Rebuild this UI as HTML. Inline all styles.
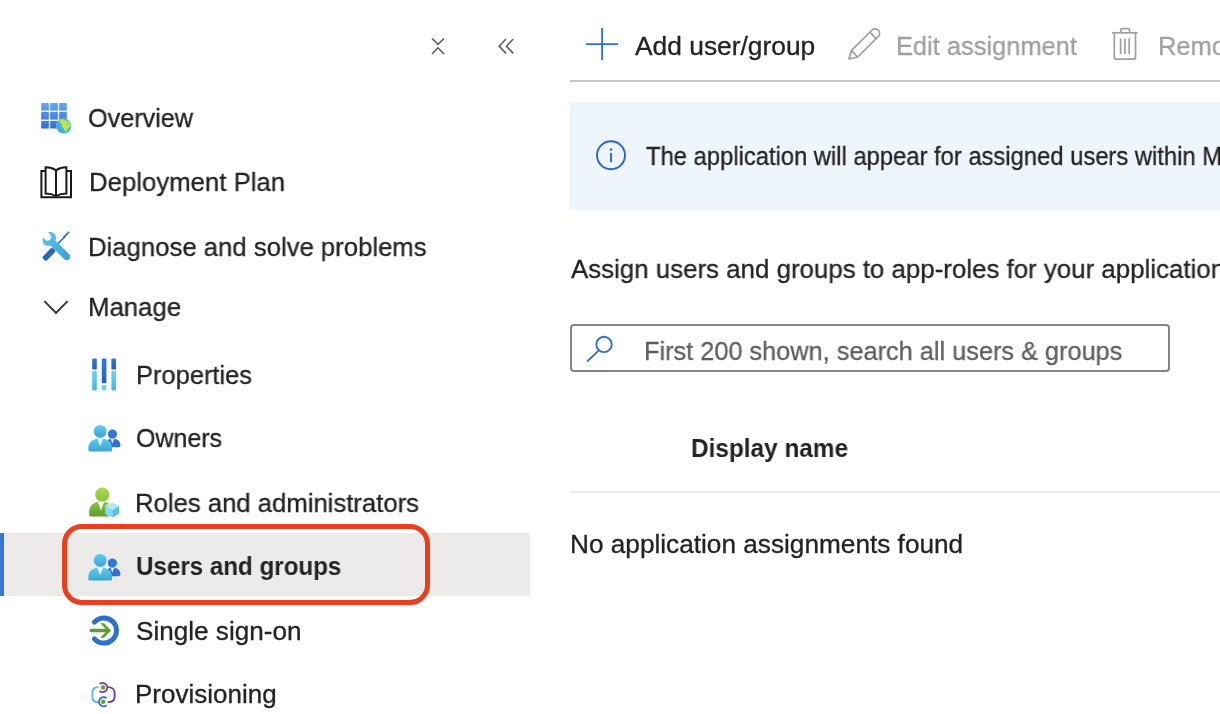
<!DOCTYPE html>
<html><head><meta charset="utf-8">
<style>
html,body{margin:0;padding:0;background:#fff;}
body{width:1220px;height:714px;overflow:hidden;position:relative;font-family:"Liberation Sans",sans-serif;color:#242322;}
.t{position:absolute;transform-origin:0 0;will-change:transform;-webkit-text-stroke:0.3px currentColor;font-size:26px;line-height:30px;white-space:nowrap;}
.ic{position:absolute;overflow:visible;}
.b{font-weight:bold;-webkit-text-stroke:0;}
</style></head><body>

<!-- sidebar top icons -->
<svg class="ic" style="left:0;top:0" width="560" height="100" viewBox="0 0 560 100">
  <path d="M432 38.5 L438 44.3 L444 38.5 M432 54 L438 47.8 L444 54" fill="none" stroke="#605e5c" stroke-width="1.6"/>
  <path d="M506 39 L499.2 46.2 L506 53.4 M513.2 39 L506.4 46.2 L513.2 53.4" fill="none" stroke="#605e5c" stroke-width="1.6"/>
</svg>

<!-- selected highlight -->
<div style="position:absolute;left:0;top:532.5px;width:530px;height:63.5px;background:#edebe9"></div>
<div style="position:absolute;left:0;top:532.5px;width:4px;height:63.5px;background:#3877d3"></div>

<!-- menu texts -->
<div class="t" style="left:88.0px;top:103.0px;transform:scaleX(0.9695)">Overview</div>
<div class="t" style="left:88.5px;top:167.1px;transform:scaleX(0.9906)">Deployment Plan</div>
<div class="t" style="left:88.0px;top:231.5px;transform:scaleX(0.9885)">Diagnose and solve problems</div>
<div class="t" style="left:88.0px;top:292.3px;transform:scaleX(0.9913)">Manage</div>
<div class="t" style="left:135.6px;top:359.6px;transform:scaleX(0.9786)">Properties</div>
<div class="t" style="left:136.0px;top:423.4px;transform:scaleX(0.9607)">Owners</div>
<div class="t" style="left:135.0px;top:487.6px;transform:scaleX(0.9875)">Roles and administrators</div>
<div class="t b" style="left:136.1px;top:551.4px;transform:scaleX(0.929)">Users and groups</div>
<div class="t" style="left:136.0px;top:615.8px;transform:scaleX(1.0042)">Single sign-on</div>
<div class="t" style="left:135.0px;top:679.2px;transform:scaleX(0.9988)">Provisioning</div>

<!-- red annotation -->
<div style="position:absolute;left:62px;top:523.5px;width:358px;height:71.7px;border:5px solid #e8401f;border-radius:20px;"></div>

<!-- toolbar -->
<svg class="ic" style="left:0;top:0" width="1220" height="100" viewBox="0 0 1220 100">
  <path d="M586 44.2 H618 M602.1 28 V60.2" stroke="#2f6fd0" stroke-width="1.8" fill="none"/>
</svg>
<div class="t" style="left:634.5px;top:31.0px;transform:scaleX(1.014)">Add user/group</div>
<div class="t" style="left:895.5px;top:31.0px;transform:scaleX(0.9779);color:#a19f9d">Edit assignment</div>
<div class="t" style="left:1158.0px;top:31.0px;transform:scaleX(0.9779);color:#a19f9d">Remove</div>
<div style="position:absolute;left:570px;top:80px;width:650px;height:2px;background:#c8c6c4"></div>

<!-- banner -->
<div style="position:absolute;left:570px;top:102px;width:650px;height:108px;background:#eff5fd"></div>
<div class="t" style="left:645.6px;top:140.7px;transform:scaleX(0.9142)">The application will appear for assigned users within My Apps</div>

<div class="t" style="left:570.5px;top:254.2px;transform:scaleX(0.9945)">Assign users and groups to app-roles for your application here.</div>

<!-- search -->
<div style="position:absolute;left:570px;top:324.3px;width:596px;height:43.6px;border:2px solid #858381;border-radius:4px"></div>
<div class="t" style="left:644.0px;top:335.6px;transform:scaleX(0.9736);color:#605e5c">First 200 shown, search all users &amp; groups</div>

<div class="t b" style="left:690.6px;top:432.9px;transform:scaleX(0.937)">Display name</div>
<div style="position:absolute;left:570px;top:490.5px;width:650px;height:2px;background:#edebe9"></div>
<div class="t" style="left:569.8px;top:528.8px;transform:scaleX(1.0075)">No application assignments found</div>


<!-- ICONS overlay -->
<svg class="ic" style="left:0;top:0" width="1220" height="714" viewBox="0 0 1220 714">
<defs>
  <linearGradient id="gGrid" gradientUnits="userSpaceOnUse" x1="0" y1="103" x2="0" y2="129"><stop offset="0" stop-color="#67a5ee"/><stop offset="1" stop-color="#2f6dd3"/></linearGradient>
  <linearGradient id="gLB" x1="0" y1="0" x2="0" y2="1"><stop offset="0" stop-color="#5fcdf0"/><stop offset="1" stop-color="#3ea3d3"/></linearGradient>
  <linearGradient id="gDB" x1="0" y1="0" x2="0" y2="1"><stop offset="0" stop-color="#3176d6"/><stop offset="1" stop-color="#2463c4"/></linearGradient>
  <linearGradient id="gGreen" gradientUnits="userSpaceOnUse" x1="0" y1="488" x2="0" y2="517"><stop offset="0" stop-color="#a8d84c"/><stop offset="0.45" stop-color="#8cc43f"/><stop offset="1" stop-color="#5e9a30"/></linearGradient>
  <linearGradient id="gWr" x1="0" y1="0" x2="1" y2="1"><stop offset="0" stop-color="#5cc8ee"/><stop offset="1" stop-color="#3a9fd3"/></linearGradient>
  <linearGradient id="gBarL" x1="0" y1="0" x2="0" y2="1"><stop offset="0" stop-color="#6ad6f6"/><stop offset="1" stop-color="#48b4e0"/></linearGradient>
</defs>

<!-- Overview grid + globe -->
<path d="M41.2 103 H66.8 V121 H59 V128.6 H41.2 Z" fill="#e3edfb"/>
<g fill="url(#gGrid)">
  <rect x="41.2" y="103" width="7.6" height="7.6" rx="0.4"/>
  <rect x="50.2" y="103" width="7.6" height="7.6" rx="0.4"/>
  <rect x="59.2" y="103" width="7.6" height="7.6" rx="0.4"/>
  <rect x="41.2" y="112" width="7.6" height="7.6" rx="0.4"/>
  <rect x="50.2" y="112" width="7.6" height="7.6" rx="0.4"/>
  <rect x="59.2" y="112" width="7.6" height="7.6" rx="0.4"/>
  <rect x="41.2" y="121" width="7.6" height="7.6" rx="0.4"/>
  <rect x="50.2" y="121" width="7.6" height="7.6" rx="0.4"/>
</g>

<circle cx="63.7" cy="125.9" r="7.9" fill="#8ccdf0" opacity="0.5"/>
<circle cx="63.7" cy="125.9" r="7.4" fill="#44b0dc"/>
<path d="M59.2 121.7 C59.6 120.4 60.6 119.4 62.1 118.9 C63.4 119.4 64.4 120 65.4 120.4 L67.5 121.1 C68.6 121.6 69.4 122.2 69.8 122.8 C70.4 123.6 70.8 124.6 70.8 125.4 C70.6 126 70.2 126.4 69.8 126.8 C69.2 127.4 68.6 128 68.1 128.8 C67.6 129.6 67.2 130.2 66.8 130.8 C66.4 131.2 65.9 131.6 65.4 131.8 L64.8 131.2 C64.5 130.6 64.3 130 64.1 129.5 C63.7 128.9 63.2 128.3 62.8 127.8 C62.3 127.2 61.9 126.7 61.7 126.1 C61.5 125.2 61.5 124.2 61.4 123.4 C61 123.1 60.7 123 60.4 122.8 C59.9 122.5 59.5 122.1 59.2 121.7 Z" fill="#bde64d"/>
<circle cx="68.1" cy="123.8" r="0.9" fill="#5cbad0"/>

<!-- Book -->
<g fill="none" stroke="#1b1a19" stroke-width="2" stroke-linejoin="miter">
  <path d="M45.4 171.1 H41.4 V197.2 H71 V171.1 H66.8"/>
  <path d="M56 196 V170.4 C53 168.2 49.6 167.3 45.6 167.3 V193.4 C49.6 193.4 53.2 194.4 56 196 C58.8 194.4 62.4 193.4 66.4 193.4 V167.3 C62.4 167.3 59 168.2 56 170.4"/>
</g>

<!-- Wrench + screwdriver -->
<path d="M56.2 245.4 L64.6 237" stroke="#2f72c4" stroke-width="1.7" stroke-linecap="round"/>
<path d="M63.2 236.4 L68.2 231.8 C69 231.2 69.9 232 69.4 232.8 L64.8 237.8 L63.4 238 Z" fill="#2f72c4"/>
<path d="M42.9 256.4 L50.6 248.6 C51.4 247.8 52.8 247.8 53.6 248.6 L54.6 249.6 C55.4 250.4 55.4 251.8 54.6 252.6 L46.8 260.4 C46.2 261 45.4 261 44.8 260.4 L42.9 258.5 C42.3 257.9 42.3 257 42.9 256.4 Z" fill="#2b67b4"/>
<path d="M48.3 232.3 C52.2 231.2 55.8 233.6 56 237.6 C56 238.8 55.8 239.6 55.4 240.4 L69.2 254.2 C70.6 255.6 70.6 257.8 69.2 259.2 C67.8 260.6 65.6 260.6 64.2 259.2 L50.4 245.4 C46 246.8 42.4 243.8 42.6 239.6 C42.6 238.8 42.8 238 43 237.4 L46.4 240.8 L50.4 240 L51.2 236 Z" fill="url(#gWr)"/>

<!-- Chevron manage -->
<path d="M44.4 301.2 L56 312.8 L67.6 301.2" fill="none" stroke="#323130" stroke-width="1.9"/>

<!-- Properties bars -->
<g>
  <rect x="92.2" y="358.4" width="4.6" height="11" rx="1" fill="url(#gDB)"/>
  <rect x="92.2" y="371" width="4.6" height="19.4" rx="0.8" fill="url(#gBarL)"/>
  <rect x="101.8" y="358.4" width="4.6" height="24.8" rx="1" fill="url(#gDB)"/>
  <rect x="101.8" y="385" width="4.6" height="5.4" rx="0.8" fill="#6ad6f6"/>
  <rect x="111.4" y="358.4" width="4.6" height="11" rx="1" fill="url(#gDB)"/>
  <rect x="111.4" y="371" width="4.6" height="19.4" rx="0.8" fill="url(#gBarL)"/>
</g>

<!-- people icon (owners) -->
<g id="ppl">
  <circle cx="112.4" cy="434" r="4.6" fill="#3176d6"/>
  <path d="M106.5 447.2 V443.8 C106.5 440.6 109 438.6 112.4 438.6 C115.8 438.6 120.3 440.6 120.3 444.6 V445.6 C120.3 446.5 119.6 447.2 118.7 447.2 Z" fill="#2e6fd0"/>
  <path d="M110.4 438.8 L114.4 438.8 L112.4 443.6 Z" fill="#d8ecfb"/>
  <circle cx="100.2" cy="431.4" r="6.4" fill="url(#gLB)"/>
  <path d="M88.4 450 V447.5 C88.4 441.8 93.5 438.2 100.2 438.2 C106.9 438.2 112 441.8 112 447.5 V450 C112 450.9 111.3 451.6 110.4 451.6 H90 C89.1 451.6 88.4 450.9 88.4 450 Z" fill="url(#gLB)"/>
  <path d="M97.2 438.3 L103.2 438.3 L100.2 446.3 Z" fill="#e6f6fd"/>
</g>
<use href="#ppl" x="0" y="129"/>

<!-- Roles person -->
<circle cx="102.3" cy="494.7" r="7.1" fill="url(#gGreen)"/>
<path d="M89.1 514.8 V511.8 C89.1 505.2 94.6 501.4 100.7 501.4 C106.8 501.4 110.6 503.6 112 507 V516.5 H90.8 C89.9 516.5 89.1 515.7 89.1 514.8 Z" fill="url(#gGreen)"/>
<path d="M97.6 501.6 L104.2 501.6 L101 510.4 Z" fill="#fdfefb"/>
<!-- cube -->
<path d="M112.4 501.6 L119.6 505.6 L119.6 514 L112.4 518.2 L105.4 514 L105.4 505.6 Z" fill="#fff" opacity="0.7"/>
<path d="M112.4 502.4 L119 506.1 L112.4 509.9 L106 506.1 Z" fill="#b3e8f9"/>
<path d="M106 506.1 L112.4 509.9 L112.4 517.5 L106 513.7 Z" fill="#86daf8"/>
<path d="M119 506.1 L112.4 509.9 L112.4 517.5 L119 513.7 Z" fill="#5cbfe6"/>

<!-- SSO -->
<path d="M94.4 622.2 A12.6 12.6 0 1 1 94.4 638.8" fill="none" stroke="#2f70c9" stroke-width="5" stroke-linecap="round"/>
<path d="M91.3 630.5 H106" stroke="#5a9f2c" stroke-width="3.6" stroke-linecap="round"/>
<path d="M100.2 623.2 H104 L111 630.5 L104 637.8 H100.2 L107.2 630.5 Z" fill="#5a9f2c"/>

<!-- Provisioning -->
<path d="M98.6 687.1 C95 687.1 92.4 689 92.4 692.6 V696.8 C92.4 700.2 94.6 702.2 98 702.2" fill="none" stroke="#5bb8e3" stroke-width="1.9"/>
<path d="M107.8 687.1 C111.6 687.1 114.6 689 114.6 692.6 V696.8 C114.6 700.2 112 702.2 107.6 702.2" fill="none" stroke="#7a3d9a" stroke-width="1.9"/>
<path d="M99.6 684 A4.6 4.6 0 1 1 99.6 691" fill="none" stroke="#7a3d9a" stroke-width="1.9"/>
<path d="M106.6 698.3 A4.6 4.6 0 1 0 106.6 705.3" fill="none" stroke="#2f70cf" stroke-width="1.9"/>
<circle cx="103.1" cy="687.5" r="2.2" fill="#5aa52e"/>
<circle cx="103.1" cy="701.8" r="2.2" fill="#5aa52e"/>

<!-- Pencil -->
<g fill="none" stroke="#a19f9d" stroke-width="1.7" stroke-linejoin="round">
  <path d="M849 59 L851.4 50.6 L872 30 C873.6 28.4 876.4 28.4 878 30 L878.4 30.4 C880 32 880 34.8 878.4 36.4 L857.8 57 Z"/>
  <path d="M851.4 50.6 L857.8 57 M869.8 32.2 L876.2 38.6"/>
</g>

<!-- Trash -->
<g fill="none" stroke="#a19f9d" stroke-width="1.7">
  <path d="M1112 32.8 H1137.6"/>
  <path d="M1120.8 32.8 V30.4 C1120.8 29.3 1121.6 28.6 1122.6 28.6 H1127.8 C1128.8 28.6 1129.6 29.3 1129.6 30.4 V32.8"/>
  <path d="M1114.3 32.8 V57.2 C1114.3 58.4 1115.2 59.2 1116.4 59.2 H1133.4 C1134.6 59.2 1135.5 58.4 1135.5 57.2 V32.8"/>
  <path d="M1120.6 38.6 V54 M1124.9 38.6 V54 M1129.2 38.6 V54"/>
</g>

<!-- Info -->
<circle cx="611" cy="155.2" r="14" fill="none" stroke="#2c63d6" stroke-width="1.9"/>
<circle cx="611" cy="149.4" r="1.25" fill="#2c63d6"/>
<path d="M611 153 V162.2" stroke="#2c63d6" stroke-width="1.9"/>

<!-- Search -->
<circle cx="604" cy="344.4" r="7.7" fill="none" stroke="#2f70cf" stroke-width="1.9"/>
<path d="M598.6 350.6 L587.6 361" stroke="#2f70cf" stroke-width="1.9" stroke-linecap="round"/>
</svg>

</body></html>
